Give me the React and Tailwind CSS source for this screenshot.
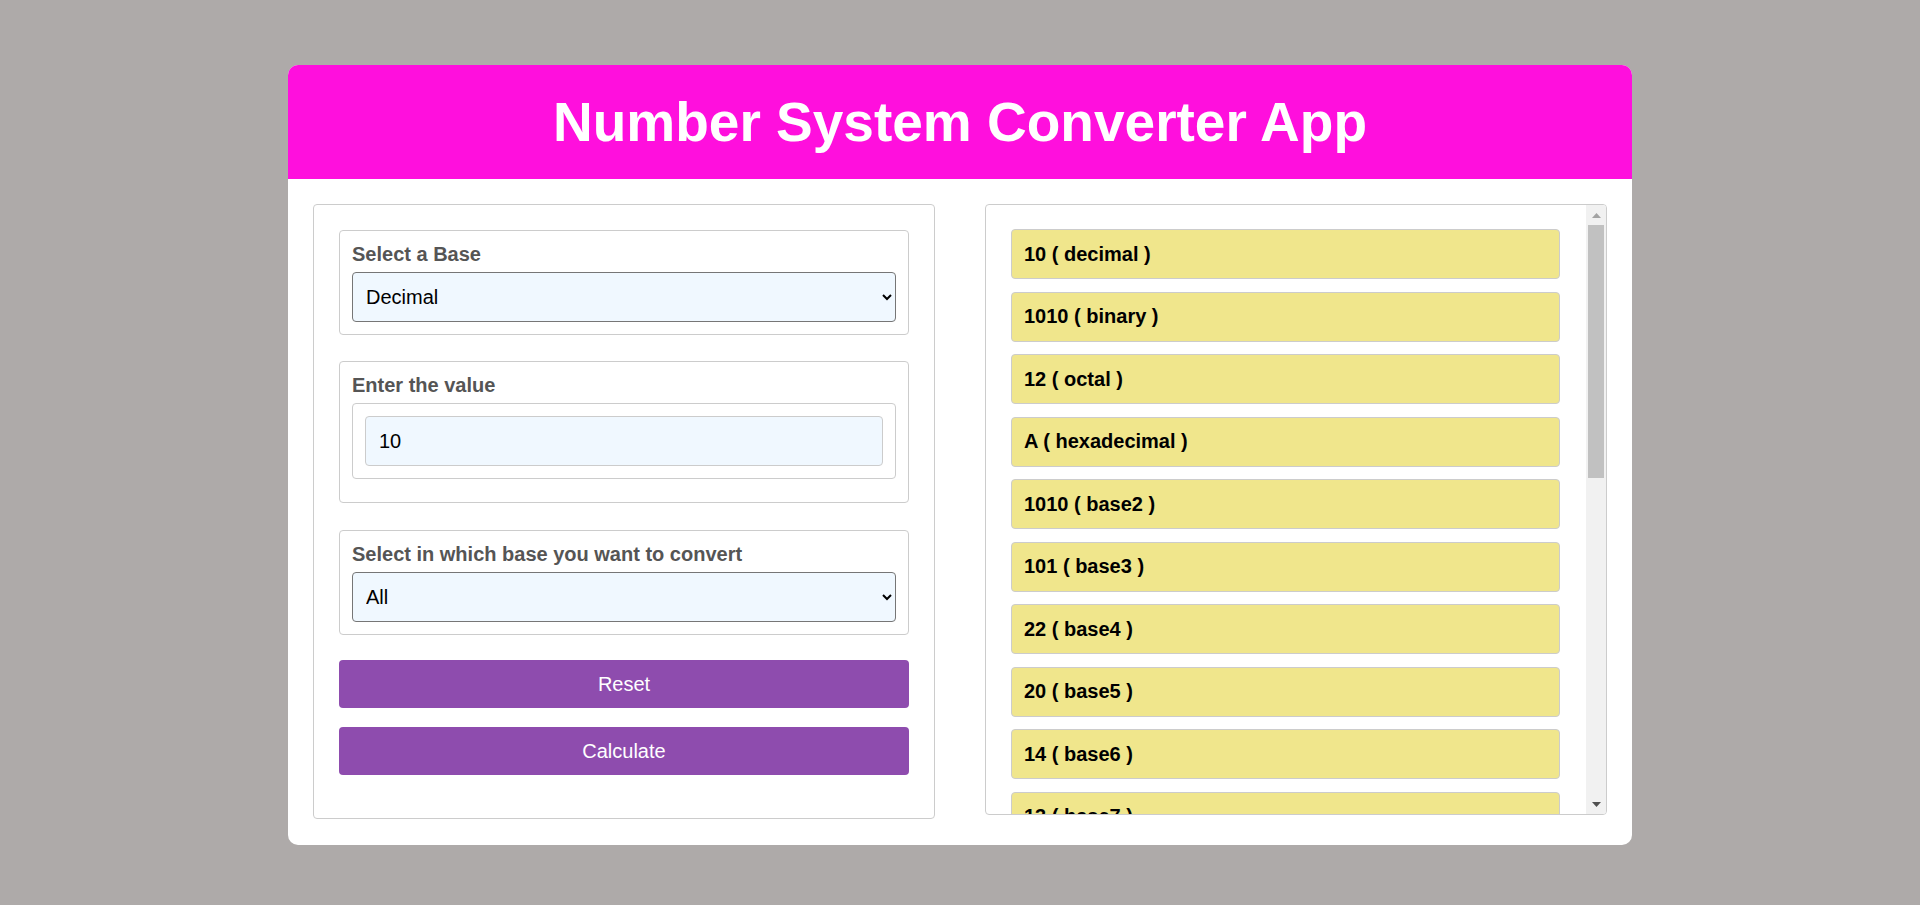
import React, { useState } from 'react';

const BASES = [
    { label: 'decimal', radix: 10 },
    { label: 'binary', radix: 2 },
    { label: 'octal', radix: 8 },
    { label: 'hexadecimal', radix: 16 },
    ...Array.from({ length: 17 }, (_, i) => ({ label: `base${i + 2}`, radix: i + 2 })),
];

const Field = ({ label, children, className = '' }) => (
    <div className={`border border-[#cccccc] rounded-[4px] p-[12px] ${className}`}>
        <label className="block text-[20px] leading-[23px] font-bold text-[#555555] mb-[6px]">{label}</label>
        {children}
    </div>
);

// stands in for the classic scrollbar, the native one is hidden
const ScrollBar = () => (
    <div className="w-[20px] shrink-0 bg-[#f1f1f1] flex flex-col">
        <div className="h-[20px] flex items-center justify-center">
            <svg width="9" height="5" viewBox="0 0 9 5">
                <path d="M4.5 0 L9 5 L0 5 Z" fill="#a3a3a3" />
            </svg>
        </div>
        <div className="flex-1">
            <div className="h-[253px] mx-[2px] bg-[#c1c1c1]"></div>
        </div>
        <div className="h-[20px] flex items-center justify-center">
            <svg width="9" height="5" viewBox="0 0 9 5">
                <path d="M0 0 L9 0 L4.5 5 Z" fill="#505050" />
            </svg>
        </div>
    </div>
);

const App = () => {
    const [fromBase, setFromBase] = useState('decimal');
    const [value, setValue] = useState('10');
    const [toBase, setToBase] = useState('all');

    const num = parseInt(value, 10);

    return (
        <div className="min-h-screen bg-[#aeaaa9] pt-[65px] pb-[60px] font-['Liberation_Sans',Arial,sans-serif]">
            <div className="w-[1344px] mx-auto bg-white rounded-[10px] overflow-hidden">
                <div className="bg-[#ff0fdd] py-[25px]">
                    <h1 className="text-center text-white font-bold text-[55px] leading-[64px]">Number System Converter App</h1>
                </div>

                <div className="flex justify-between px-[25px] pt-[25px] pb-[26px]">
                    <div className="w-[622px] border border-[#cccccc] rounded-[4px] p-[25px]">
                        <Field label="Select a Base" className="mb-[26px]">
                            <select
                                value={fromBase}
                                onChange={(e) => setFromBase(e.target.value)}
                                className="w-full h-[50px] border border-[#767676] rounded-[4px] bg-[#f0f8ff] text-[20px] text-black pl-[9px] pr-[8px]"
                            >
                                <option value="decimal">Decimal</option>
                                <option value="binary">Binary</option>
                                <option value="octal">Octal</option>
                                <option value="hexadecimal">Hexadecimal</option>
                            </select>
                        </Field>

                        <Field label="Enter the value" className="mb-[27px]">
                            <div className="border border-[#cccccc] rounded-[4px] p-[12px] mb-[11px]">
                                <input
                                    type="text"
                                    value={value}
                                    onChange={(e) => setValue(e.target.value)}
                                    className="w-full h-[50px] border border-[#cccccc] rounded-[4px] bg-[#f0f8ff] text-[20px] text-black px-[13px] outline-none"
                                />
                            </div>
                        </Field>

                        <Field label="Select in which base you want to convert" className="mb-[25px]">
                            <select
                                value={toBase}
                                onChange={(e) => setToBase(e.target.value)}
                                className="w-full h-[50px] border border-[#767676] rounded-[4px] bg-[#f0f8ff] text-[20px] text-black pl-[9px] pr-[8px]"
                            >
                                <option value="all">All</option>
                                <option value="binary">Binary</option>
                                <option value="octal">Octal</option>
                                <option value="hexadecimal">Hexadecimal</option>
                            </select>
                        </Field>

                        <button className="block w-full h-[48px] mb-[19px] bg-[#8e4cae] text-white text-[20px] rounded-[4px]">
                            Reset
                        </button>
                        <button className="block w-full h-[48px] mb-[18px] bg-[#8e4cae] text-white text-[20px] rounded-[4px]">
                            Calculate
                        </button>
                    </div>

                    <div className="w-[622px] h-[611px] flex border border-[#cccccc] rounded-[4px] overflow-hidden">
                        <div className="flex-1 overflow-y-auto [scrollbar-width:none] pl-[25px] pr-[26px] py-[24px]">
                            <div className="flex flex-col gap-[12.5px]">
                                {BASES.map((b) => (
                                    <div
                                        key={b.label}
                                        className="h-[50px] shrink-0 flex items-center px-[12px] bg-[#f0e68c] border border-[#cccccc] rounded-[4px] text-[20px] leading-[23px] font-bold text-black"
                                    >
                                        {isNaN(num) ? '' : num.toString(b.radix).toUpperCase()} ( {b.label} )
                                    </div>
                                ))}
                            </div>
                        </div>
                        <ScrollBar />
                    </div>
                </div>
            </div>
        </div>
    );
};

export default App;
